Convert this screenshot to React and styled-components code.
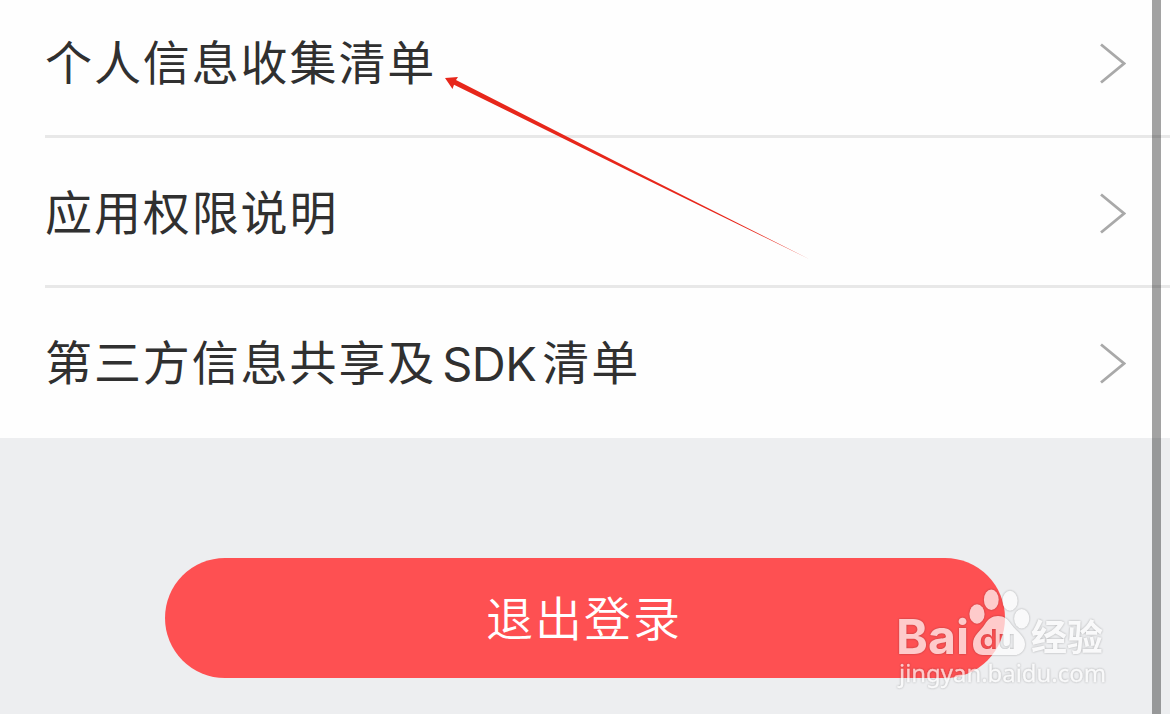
import React from 'react'
import styled, { createGlobalStyle } from 'styled-components'

const GlobalStyle = createGlobalStyle`
html, body {
  margin: 0;
  overflow: hidden;
}
`

const Page = styled.main`
position: relative;
display: flex;
flex-direction: column;
width: 1170px;
height: 714px;
overflow: hidden;
background-color: #edeef0;
font-family: Inter, "Noto Sans CJK SC", sans-serif;
`

const List = styled.ul`
list-style: none;
margin: 0;
padding: 0 0 0 45px;
background-color: #fefefe;
`

const Row = styled.li`
box-sizing: border-box;
display: flex;
align-items: flex-end;
justify-content: space-between;
height: ${props => props.$first ? '138px' : '150px'};
padding: 0 44px 36px 0;
border-bottom: solid 3px ${props => props.$last ? 'transparent' : '#e8e8e8'};
`

const Label = styled.span`
display: flex;
align-items: center;
height: 70px;
margin-bottom: 4px;
color: #303030;
font-family: "Noto Sans CJK SC", sans-serif;
font-size: 47px;
line-height: 70px;
letter-spacing: 1.9px;
white-space: pre;
`

const Latin = styled.span`
margin: 0 6px 0 6px;
padding-top: 7px;
font-family: Inter, sans-serif;
font-size: 47px;
letter-spacing: -0.5px;
`

const Chevron = styled.svg`
width: 28px;
height: 42px;
margin-bottom: 14px;
fill: none;
stroke: #a9a9a9;
stroke-width: 2.8;
`

const Footer = styled.section`
display: flex;
flex: 1;
align-items: flex-start;
padding: 120px 165px 0;
`

const LogoutButton = styled.button`
width: 840px;
height: 120px;
padding: 0 2px 6px 0;
border: none;
border-radius: 60px;
background-color: #fe5052;
color: #fff;
font-family: "Noto Sans CJK SC", sans-serif;
font-size: 47px;
font-weight: 350;
letter-spacing: 2px;
`

const ScrollBar = styled.div`
position: absolute;
top: 0;
left: 1152px;
width: 9px;
height: 100%;
background-color: rgba(0, 0, 0, 0.36);
`

const Arrow = styled.svg`
position: absolute;
top: 70px;
left: 440px;
width: 380px;
height: 200px;
`

const Watermark = styled.svg`
position: absolute;
top: 580px;
left: 890px;
width: 225px;
height: 115px;
opacity: 0.7;
fill: #fff;
filter: drop-shadow(0 0 1px rgba(0, 0, 0, 0.4));
`

const rows = [
  { before: '个人信息收集清单' },
  { before: '应用权限说明' },
  { before: '第三方信息共享及', latin: 'SDK', after: '清单' },
]

const BaiduMark = () => (
  <Watermark viewBox="890 580 225 115">
    <defs>
      <mask id="paw" maskUnits="userSpaceOnUse" x="890" y="580" width="225" height="115">
        <rect x="890" y="580" width="225" height="115" fill="#fff" />
        <text x="979.5" y="649" fontFamily="Inter" fontSize="27" fontWeight="600" textLength="36" lengthAdjust="spacingAndGlyphs" fill="#000">du</text>
      </mask>
    </defs>
    <text x="896" y="653.5" fontFamily="Inter" fontSize="47.5" fontWeight="700" textLength="73" lengthAdjust="spacingAndGlyphs">Bai</text>
    <ellipse cx="977" cy="614" rx="7.6" ry="9.7" />
    <ellipse cx="991.3" cy="599.7" rx="7.4" ry="10.2" />
    <ellipse cx="1010" cy="600.7" rx="7.6" ry="10" />
    <ellipse cx="1021.7" cy="618.7" rx="7.6" ry="9.7" />
    <path mask="url(#paw)" d="M998 616C992 616 988 619 985 624C981 631 973 635 973 644C973 651 977 655 983 655H1014C1021 655 1025 650 1025 644C1025 636 1016 631 1011 624C1008 619 1004 616 998 616Z" />
    <text x="1031" y="651" fontFamily="Noto Sans CJK SC" fontSize="36.5" fontWeight="700" textLength="72" lengthAdjust="spacingAndGlyphs">经验</text>
    <text x="899" y="681.5" fontFamily="Noto Sans" fontSize="23" textLength="207" lengthAdjust="spacingAndGlyphs" stroke="#fff" strokeWidth="0.3">jingyan.baidu.com</text>
  </Watermark>
)

const App = () => {
  return (
    <>
      <GlobalStyle />
      <Page>
        <List>
          {rows.map((row, i) => (
            <Row key={row.before} $first={i === 0} $last={i === rows.length - 1}>
              <Label>
                {row.before}
                {row.latin && <Latin>{row.latin}</Latin>}
                {row.after}
              </Label>
              <Chevron viewBox="0 0 28 42">
                <path d="M3 1.5L26 20.5L3 39.5" />
              </Chevron>
            </Row>
          ))}
        </List>
        <Footer>
          <LogoutButton type="button">退出登录</LogoutButton>
        </Footer>
        <Arrow viewBox="440 70 380 200">
          <path d="M445 78L458 77L456 80L630 168.8L810 259.5L630 171.4L454 84.8L452.5 89Z" fill="#e7271b" />
        </Arrow>
        <BaiduMark />
        <ScrollBar />
      </Page>
    </>
  )
}

export default App
